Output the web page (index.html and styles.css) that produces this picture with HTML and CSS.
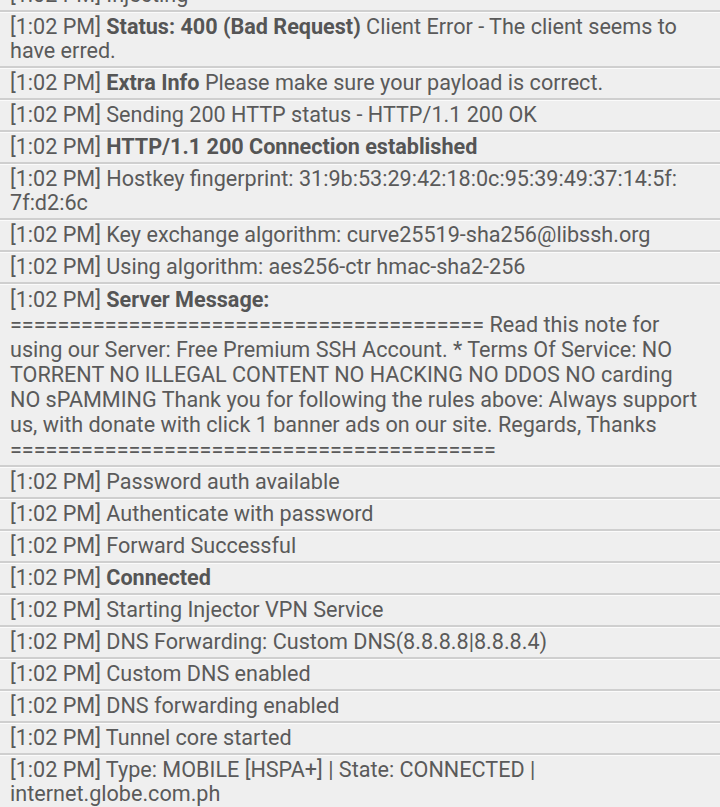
FILE: index.html
```html
<!DOCTYPE html>
<html lang="en">
<head>
<meta charset="utf-8">
<title>Log</title>
<link rel="stylesheet" href="styles.css">
</head>
<body>
<ul class="log">
  <li class="entry">[1:02 PM] Injecting</li>
  <li class="entry">[1:02 PM] <b>Status: 400 (Bad Request)</b> Client Error - The client seems to have erred.</li>
  <li class="entry">[1:02 PM] <b>Extra Info</b> Please make sure your payload is correct.</li>
  <li class="entry">[1:02 PM] Sending 200 HTTP status - HTTP/1.1 200 OK</li>
  <li class="entry">[1:02 PM] <b>HTTP/1.1 200 Connection established</b></li>
  <li class="entry">[1:02 PM] Hostkey fingerprint: 31:<wbr>9b:<wbr>53:<wbr>29:<wbr>42:<wbr>18:<wbr>0c:<wbr>95:<wbr>39:<wbr>49:<wbr>37:<wbr>14:<wbr>5f:<wbr>7f:d2:6c</li>
  <li class="entry">[1:02 PM] Key exchange algorithm: curve25519-sha256@libssh.org</li>
  <li class="entry">[1:02 PM] Using algorithm: aes256-ctr hmac-sha2-256</li>
  <li class="entry entry-tall">[1:02 PM] <b>Server Message:</b><br>======================================== Read this note for using our Server: Free Premium SSH Account. * Terms Of Service: NO TORRENT NO ILLEGAL CONTENT NO HACKING NO DDOS NO carding NO&nbsp;sPAMMING Thank you for following the rules above: Always support us, with donate with click 1 banner ads on our site. Regards, Thanks =========================================</li>
  <li class="entry">[1:02 PM] Password auth available</li>
  <li class="entry">[1:02 PM] Authenticate with password</li>
  <li class="entry">[1:02 PM] Forward Successful</li>
  <li class="entry">[1:02 PM] <b>Connected</b></li>
  <li class="entry">[1:02 PM] Starting Injector VPN Service</li>
  <li class="entry">[1:02 PM] DNS Forwarding: Custom DNS(8.8.8.8|8.8.8.4)</li>
  <li class="entry">[1:02 PM] Custom DNS enabled</li>
  <li class="entry">[1:02 PM] DNS forwarding enabled</li>
  <li class="entry">[1:02 PM] Tunnel core started</li>
  <li class="entry">[1:02 PM] Type: MOBILE [HSPA+] | State: CONNECTED | internet.globe.com.ph</li>
</ul>
</body>
</html>
```

FILE: styles.css
```css
html, body {
  margin: 0;
  padding: 0;
  background: #efefef;
  overflow: hidden;
}

.log {
  list-style: none;
  margin: -20px 0 0 0;
  padding: 0;
  font-family: Roboto, "Noto Sans", sans-serif;
  font-size: 21.6px;
  line-height: 24px;
  color: #5a5a5a;
}

.entry {
  padding: 3px 10px 3px 10px;
  border-bottom: 2px solid #cfcfcf;
  box-shadow: 0 1px 0 #fbfbfb;
}

.entry b {
  font-weight: 700;
  color: #555555;
}

.entry-tall {
  line-height: 25px;
}
```
